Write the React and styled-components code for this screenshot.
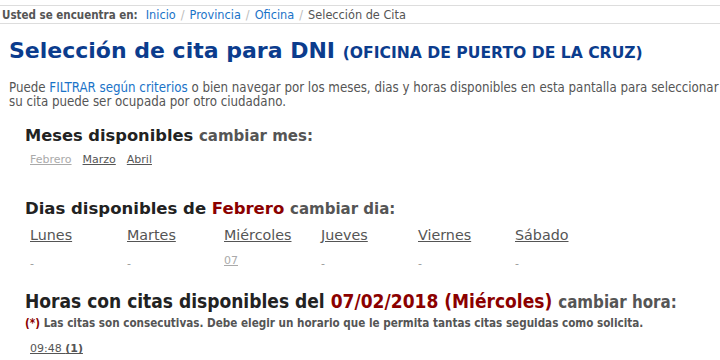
import styled, { createGlobalStyle } from "styled-components";

const Global = createGlobalStyle`
  body {
    margin: 0;
    background: #fff;
    font-family: "DejaVu Sans", Verdana, sans-serif;
    color: #555;
  }
`;

const Page = styled.div`
  width: 720px;
  height: 360px;
  overflow: hidden;
`;

const Crumbs = styled.div`
  display: flex;
  align-items: center;
  height: 17px;
  margin-top: 5px;
  padding-left: 2px;
  border-top: 1px solid #ddd;
  border-bottom: 1px solid #ddd;
  font-family: "DejaVu Sans Condensed", "DejaVu Sans", sans-serif;
  white-space: nowrap;
`;

const CrumbLabel = styled.b`
  color: #555;
  font-size: 11.5px;
  margin-right: 8px;
`;

const Crumb = styled.a`
  color: ${(p) => (p.current ? "#555" : "#1a73c8")};
  text-decoration: none;
  font-size: 12.6px;
`;

const Sep = styled.span`
  color: #bbb;
  margin: 0 5px;
  font-size: 12.6px;
`;

const Title = styled.h1`
  margin: 14px 0 0 9px;
  font-size: 22px;
  color: #0b3c8d;
  white-space: nowrap;
`;

const Sub = styled.span`
  font-size: 15.6px;
`;

const Intro = styled.p`
  margin: 18px 0 0 9px;
  font-family: "DejaVu Sans Condensed", "DejaVu Sans", sans-serif;
  font-size: 13.2px;
  line-height: 14px;
  white-space: nowrap;
  color: #555;
`;

const Blue = styled.a`
  color: #1a73c8;
  text-decoration: none;
`;

const Section = styled.section`
  margin-left: 25px;
`;

const H2 = styled.h2`
  margin: ${(p) => p.top}px 0 0;
  font-size: ${(p) => p.size}px;
  color: #222;
  white-space: nowrap;
  font-family: ${(p) =>
    p.narrow ? '"DejaVu Sans Condensed", "DejaVu Sans", sans-serif' : '"DejaVu Sans", sans-serif'};
`;

const Red = styled.span`
  color: #8b0000;
`;

const Change = styled.span`
  color: #555;
  font-size: ${(p) => p.size}px;
`;

const Months = styled.div`
  display: flex;
  gap: 11px;
  margin: 8px 0 0 5px;
  font-size: 11px;
`;

const Link = styled.a`
  color: ${(p) => (p.off ? "#aaa" : "#555")};
  font-weight: ${(p) => (p.bold ? "bold" : "normal")};
  text-decoration: underline;
`;

const Days = styled.div`
  display: grid;
  grid-template-columns: repeat(6, 97px);
  margin: 7px 0 0 5px;
`;

const Cell = styled.div`
  color: #555;
  font-size: ${(p) => (p.small ? 11 : 14.3)}px;
  height: ${(p) => (p.small ? 24 : 18)}px;
  display: flex;
  align-items: flex-end;
`;

const Dash = styled.span`
  color: #999;
  font-size: 11px;
  margin-bottom: -3px;
`;

const Note = styled.p`
  margin: 4px 0 0;
  font-size: 11.6px;
  font-weight: bold;
  font-family: "DejaVu Sans Condensed", "DejaVu Sans", sans-serif;
  color: #555;
  white-space: nowrap;
`;

const Hour = styled.div`
  margin: 12px 0 0 5px;
  font-size: 11px;
  color: #555;
`;

const days = ["Lunes", "Martes", "Miércoles", "Jueves", "Viernes", "Sábado"];

export default function App() {
  return (
    <Page>
      <Global />
      <Crumbs>
        <CrumbLabel>Usted se encuentra en:</CrumbLabel>
        <Crumb>Inicio</Crumb>
        <Sep>/</Sep>
        <Crumb>Provincia</Crumb>
        <Sep>/</Sep>
        <Crumb>Oficina</Crumb>
        <Sep>/</Sep>
        <Crumb current>Selección de Cita</Crumb>
      </Crumbs>
      <Title>
        Selección de cita para DNI <Sub>(OFICINA DE PUERTO DE LA CRUZ)</Sub>
      </Title>
      <Intro>
        Puede <Blue>FILTRAR según criterios</Blue> o bien navegar por los meses, dias y horas
        disponibles en esta pantalla para seleccionar
        <br />
        su cita puede ser ocupada por otro ciudadano.
      </Intro>
      <Section>
        <H2 top={17} size={16.3}>
          Meses disponibles <Change size={15}>cambiar mes:</Change>
        </H2>
        <Months>
          <Link off>Febrero</Link>
          <Link>Marzo</Link>
          <Link>Abril</Link>
        </Months>
        <H2 top={33} size={16.5}>
          Dias disponibles de <Red>Febrero</Red> <Change size={15}>cambiar dia:</Change>
        </H2>
        <Days>
          {days.map((d) => (
            <Cell key={d}>
              <Link>{d}</Link>
            </Cell>
          ))}
          {days.map((d, i) => (
            <Cell key={d + "x"} small>
              {i === 2 ? <Link off>07</Link> : <Dash>-</Dash>}
            </Cell>
          ))}
        </Days>
        <H2 top={23} size={19} narrow>
          Horas con citas disponibles del <Red>07/02/2018 (Miércoles)</Red>{" "}
          <Change size={16.8}>cambiar hora:</Change>
        </H2>
        <Note>
          <Red>(*)</Red> Las citas son consecutivas. Debe elegir un horario que le permita tantas
          citas seguidas como solicita.
        </Note>
        <Hour>
          <Link>09:48 </Link>
          <Link bold>(1)</Link>
        </Hour>
      </Section>
    </Page>
  );
}
